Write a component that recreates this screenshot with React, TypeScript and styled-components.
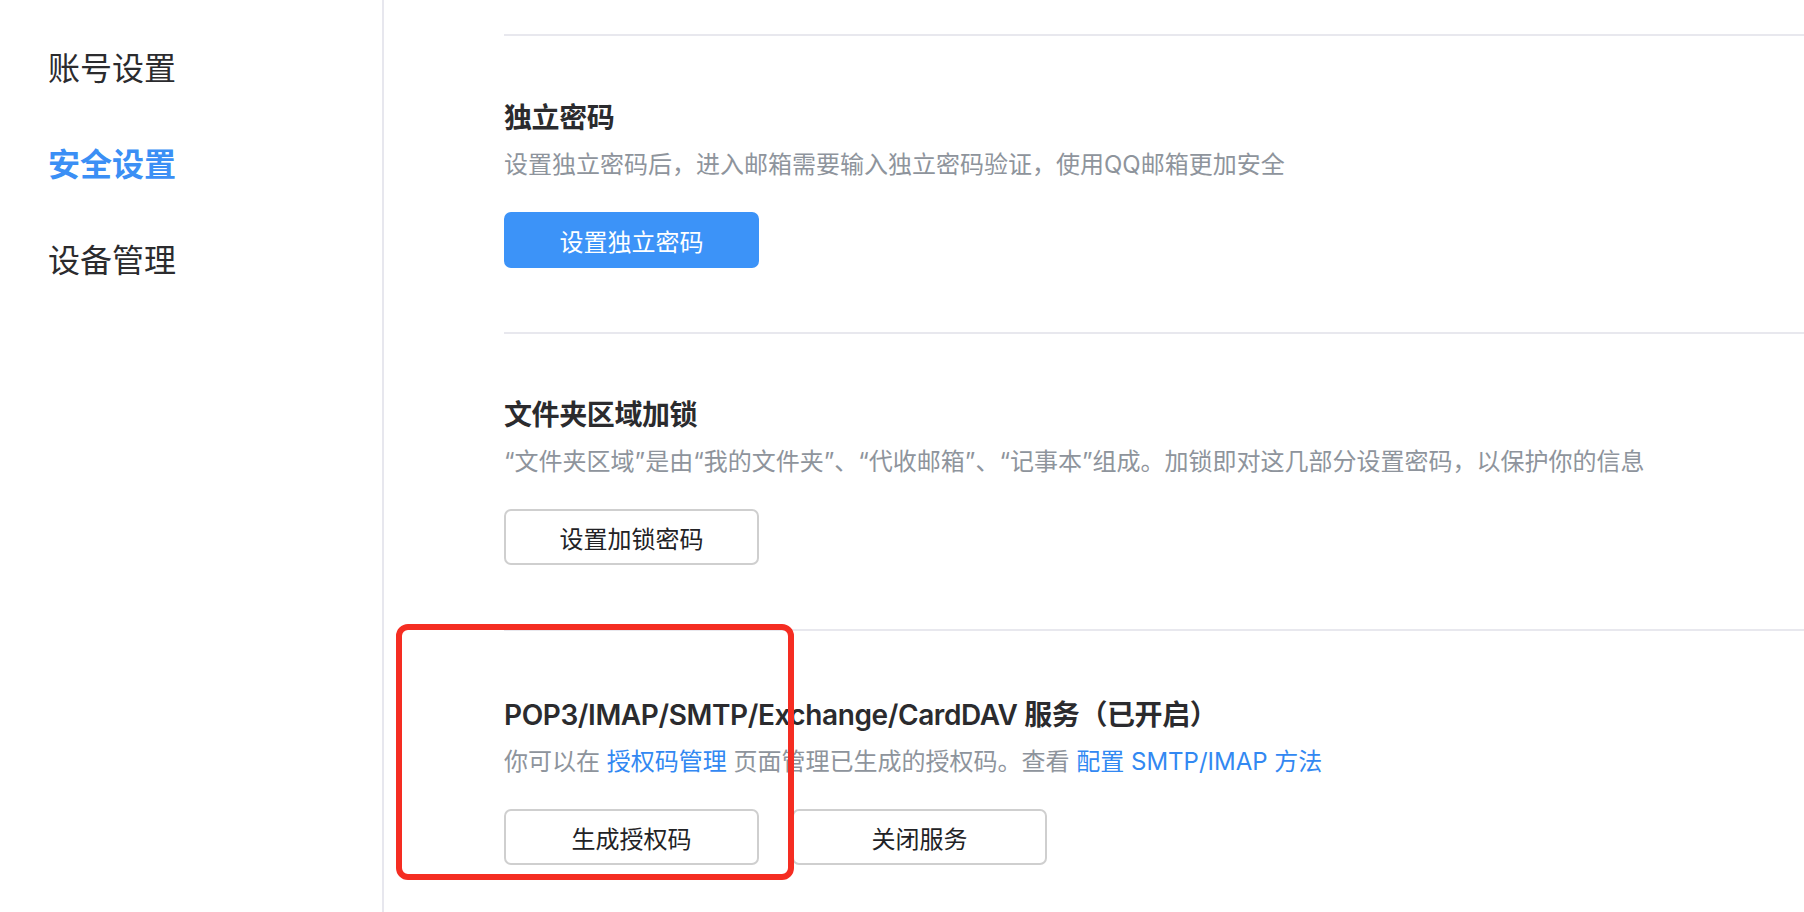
import styled, { createGlobalStyle } from 'styled-components';

const GlobalStyle = createGlobalStyle`
  html, body {
    margin: 0;
    padding: 0;
    background: #ffffff;
  }
  body {
    font-family: "Inter", "Noto Sans CJK SC", sans-serif;
    color: #2b2b2e;
  }
`;

const Layout = styled.div`
  display: flex;
  min-height: 100vh;
  overflow: hidden;
`;

const Sidebar = styled.nav`
  width: 382px;
  flex-shrink: 0;
  border-right: 2px solid #e7e7ee;
  padding-top: 21px;
  display: flex;
  flex-direction: column;
`;

const NavItem = styled.div<{ $active?: boolean }>`
  padding-left: 48px;
  height: 96px;
  line-height: 96px;
  font-size: 32px;
  font-weight: ${(p) => (p.$active ? 600 : 400)};
  color: ${(p) => (p.$active ? '#3b8ff5' : '#2b2b2e')};
  cursor: pointer;
`;

const Main = styled.main`
  flex: 1;
  padding: 34px 0 0 120px;
  display: flex;
  flex-direction: column;
`;

const Section = styled.section<{ $top: number }>`
  position: relative;
  border-top: 2px solid #e8e8ee;
  padding: ${(p) => p.$top}px 0 64px;
`;

const Title = styled.h3`
  margin: 0;
  font-size: 28px;
  line-height: 40px;
  font-weight: 600;
  letter-spacing: -0.4px;
  color: #2b2b2e;
`;

const Desc = styled.p`
  margin: 9px 0 0;
  font-size: 24px;
  line-height: 36px;
  color: #8e949c;
`;

const Link = styled.a`
  color: #3288f2;
  text-decoration: none;
  cursor: pointer;
`;

const Actions = styled.div`
  display: flex;
  gap: 33px;
  margin-top: 29px;
`;

const Button = styled.button<{ $primary?: boolean }>`
  box-sizing: border-box;
  width: 255px;
  height: 56px;
  border-radius: 7px;
  font-family: inherit;
  font-size: 24px;
  cursor: pointer;
  border: 2px solid ${(p) => (p.$primary ? '#3c93f8' : '#cfcfcf')};
  background: ${(p) => (p.$primary ? '#3c93f8' : '#ffffff')};
  color: ${(p) => (p.$primary ? '#ffffff' : '#222225')};
`;

const Highlight = styled.div`
  position: absolute;
  left: -108px;
  top: -7px;
  width: 398px;
  height: 256px;
  box-sizing: border-box;
  border: 6px solid #f52d22;
  border-radius: 12px;
  pointer-events: none;
`;

const navItems = ['账号设置', '安全设置', '设备管理'];

const App = () => {
  return (
    <>
      <GlobalStyle />
      <Layout>
        <Sidebar>
          {navItems.map((item) => (
            <NavItem key={item} $active={item === '安全设置'}>
              {item}
            </NavItem>
          ))}
        </Sidebar>
        <Main>
          <Section $top={62}>
            <Title>独立密码</Title>
            <Desc>设置独立密码后，进入邮箱需要输入独立密码验证，使用QQ邮箱更加安全</Desc>
            <Actions>
              <Button $primary>设置独立密码</Button>
            </Actions>
          </Section>
          <Section $top={61}>
            <Title>文件夹区域加锁</Title>
            <Desc>
              “文件夹区域”是由“我的文件夹”、“代收邮箱”、“记事本”组成。加锁即对这几部分设置密码，以保护你的信息
            </Desc>
            <Actions>
              <Button>设置加锁密码</Button>
            </Actions>
          </Section>
          <Section $top={64}>
            <Title>POP3/IMAP/SMTP/Exchange/CardDAV 服务（已开启）</Title>
            <Desc>
              你可以在 <Link>授权码管理</Link> 页面管理已生成的授权码。查看{' '}
              <Link>配置 SMTP/IMAP 方法</Link>
            </Desc>
            <Actions>
              <Button>生成授权码</Button>
              <Button>关闭服务</Button>
            </Actions>
            <Highlight />
          </Section>
        </Main>
      </Layout>
    </>
  );
};

export default App;
